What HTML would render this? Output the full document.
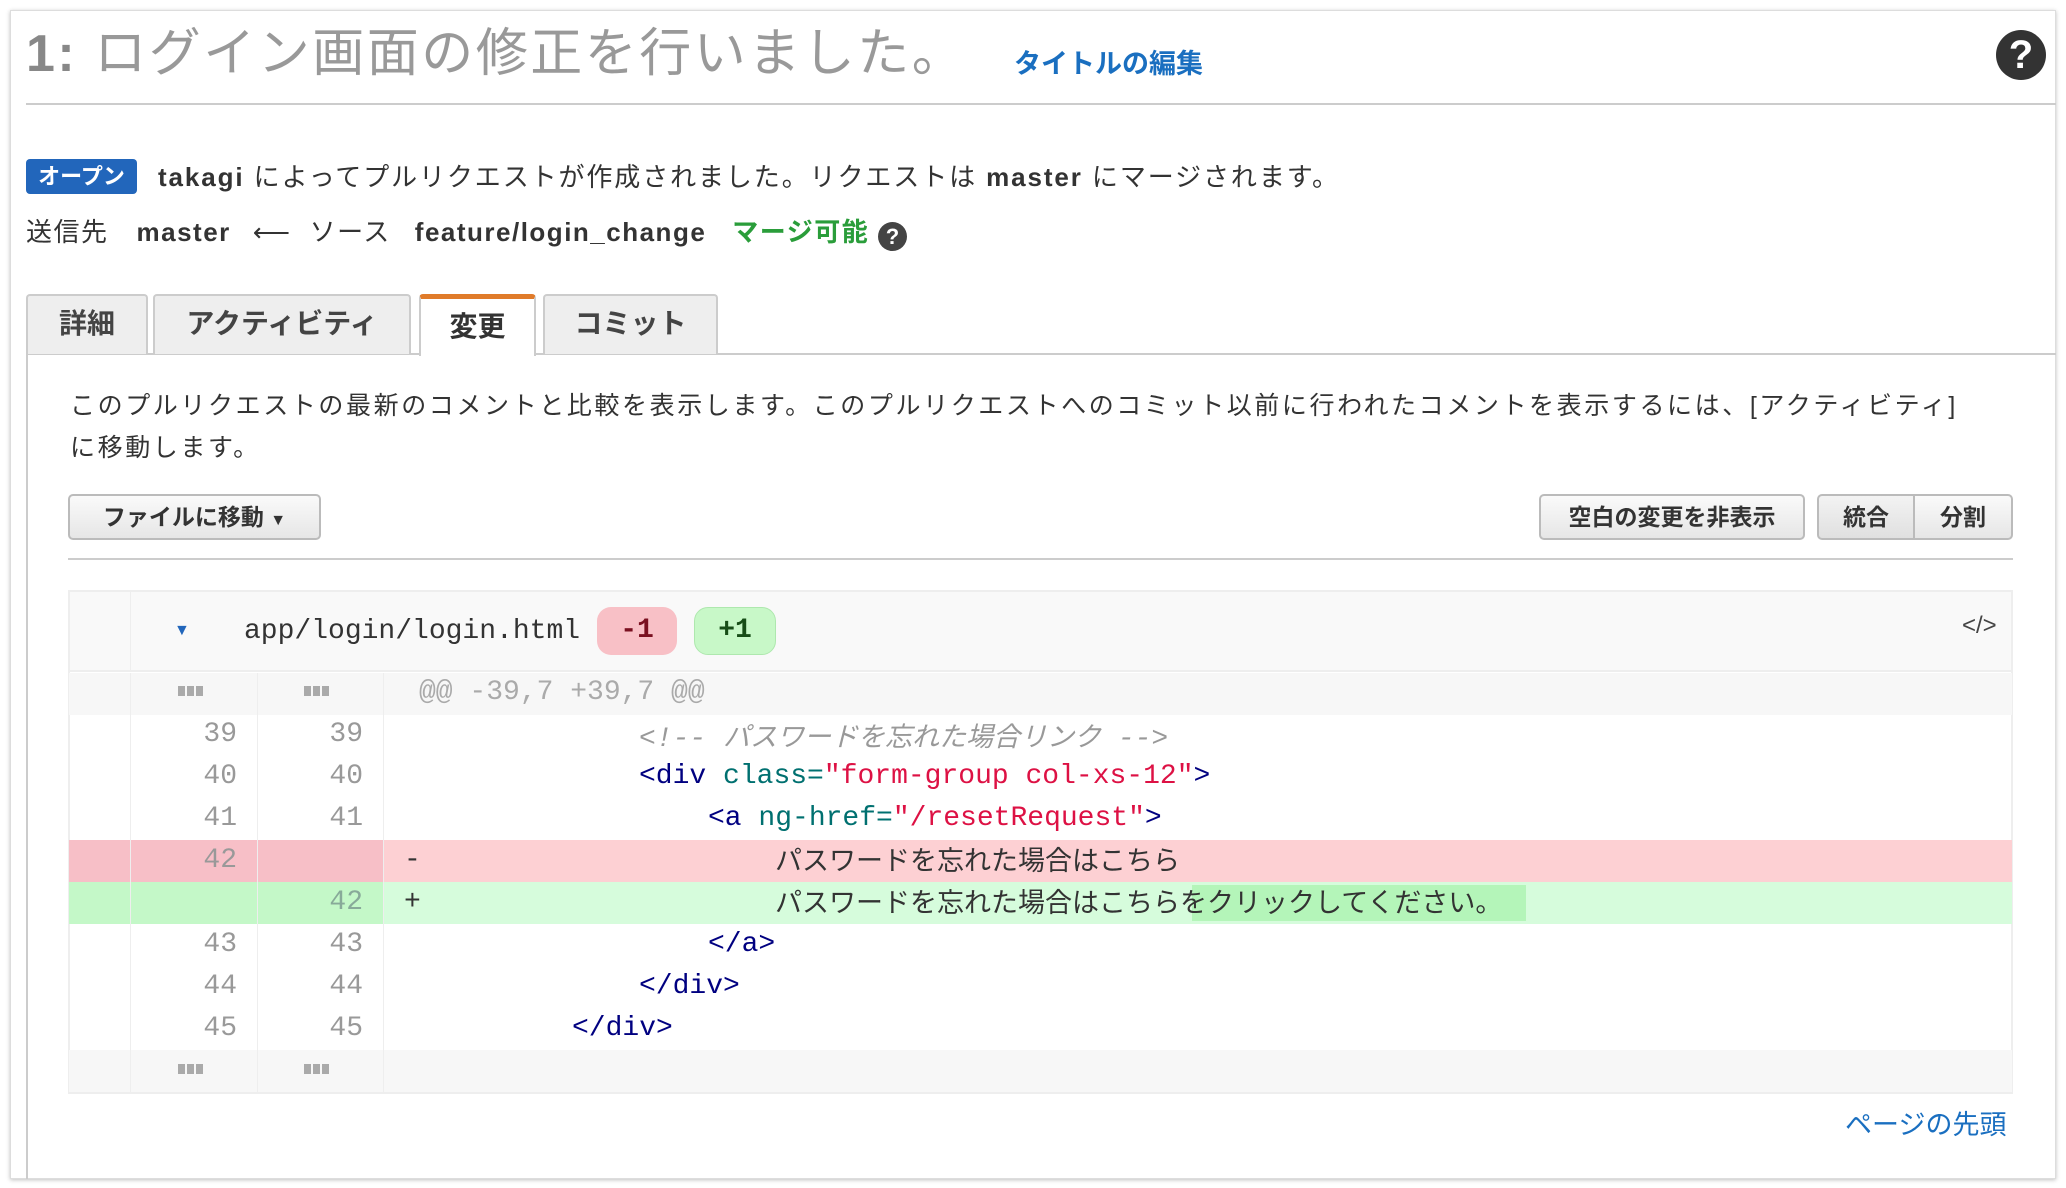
<!DOCTYPE html>
<html><head><meta charset="utf-8">
<style>
*{margin:0;padding:0;box-sizing:border-box}
body{width:2066px;height:1188px;background:#fff;position:relative;overflow:hidden;font-family:"Liberation Sans","Noto Sans CJK JP",sans-serif;color:#333}
.a{position:absolute;white-space:nowrap}
.card{left:10px;top:10px;width:2046px;height:1169px;border:1px solid #ddd;box-shadow:0 1px 4px rgba(0,0,0,.25)}
.mono{font-family:"Liberation Mono","Noto Sans CJK JP",monospace;font-size:28px}
.jp{font-family:"Noto Sans CJK JP",sans-serif;font-size:27px}
.tab{top:294px;height:60px;background:#eee;border:2px solid #ccc;border-bottom:none;border-radius:4px 4px 0 0;font-size:28px;font-weight:bold;color:#444;text-align:center;line-height:56px}
.btn{top:494px;height:46px;background:linear-gradient(#fafafa,#e6e6e6);border:2px solid #bbb;border-radius:5px;font-size:23px;font-weight:bold;color:#333;text-align:center;line-height:42px}
.row{left:69px;width:1943px;height:42px}
.ln{color:#999;font-size:28px;line-height:42px;text-align:right}
.code{line-height:42px}
.t{color:#000080}.at{color:#007070}.s{color:#dd1144}
.dots{font-size:0}
.dots i{display:inline-block;width:7px;height:10px;background:#aaa;margin-right:2px}
</style></head><body>
<div class="a card"></div>
<!-- title -->
<div class="a" style="left:26px;top:18px;font-size:52px;color:#999;line-height:72px;letter-spacing:2.5px"><b style="color:#888">1:</b> ログイン画面の修正を行いました。</div>
<div class="a" style="left:1014px;top:44px;font-size:27px;font-weight:bold;color:#1a6fc0;line-height:40px">タイトルの編集</div>
<div class="a" style="left:1996px;top:30px;width:50px;height:50px;border-radius:50%;background:#333;color:#fff;font-weight:bold;font-size:40px;text-align:center;line-height:50px">?</div>
<div class="a" style="left:26px;top:103px;width:2030px;height:2px;background:#ccc"></div>
<!-- status -->
<div class="a" style="left:26px;top:159px;width:111px;height:35px;background:#2266bb;border-radius:4px;color:#fff;font-weight:bold;font-size:22px;text-align:center;line-height:35px">オープン</div>
<div class="a" style="left:158px;top:158px;font-size:26px;line-height:38px;color:#333;letter-spacing:1.9px"><b>takagi</b> によってプルリクエストが作成されました。リクエストは <b>master</b> にマージされます。</div>
<div class="a" style="left:26px;top:213px;font-size:26px;line-height:38px;color:#333;letter-spacing:1.5px">送信先<span style="display:inline-block;width:28px"></span><b>master</b><span style="display:inline-block;width:22px"></span>⟵<span style="display:inline-block;width:18px"></span>ソース<span style="display:inline-block;width:24px"></span><b>feature/login_change</b><span style="display:inline-block;width:26px"></span><b style="color:#2a9d3a">マージ可能</b> <span style="display:inline-block;width:29px;height:29px;border-radius:50%;background:#444;color:#fff;font-size:22px;font-weight:bold;text-align:center;line-height:29px;vertical-align:-3px;letter-spacing:0">?</span></div>
<!-- tabs -->
<div class="a" style="left:26px;top:353px;width:2030px;height:2px;background:#ccc"></div>
<div class="a tab" style="left:26px;width:122px">詳細</div>
<div class="a tab" style="left:153px;width:258px">アクティビティ</div>
<div class="a tab" style="left:419px;width:117px;height:62px;background:#fff;border-top:5px solid #e07b2a;line-height:56px;color:#333">変更</div>
<div class="a tab" style="left:543px;width:175px">コミット</div>
<div class="a" style="left:26px;top:354px;width:2px;height:825px;background:#ccc"></div>
<!-- desc -->
<div class="a" style="left:70px;top:385px;font-size:25px;line-height:42px;color:#333;letter-spacing:2.6px">このプルリクエストの最新のコメントと比較を表示します。このプルリクエストへのコミット以前に行われたコメントを表示するには、[アクティビティ]<br>に移動します。</div>
<!-- buttons -->
<div class="a btn" style="left:68px;width:253px">ファイルに移動 <span style="font-size:16px">▼</span></div>
<div class="a btn" style="left:1539px;width:266px">空白の変更を非表示</div>
<div class="a btn" style="left:1817px;width:98px;border-radius:5px 0 0 5px;background:linear-gradient(#f3f3f3,#e0e0e0)">統合</div>
<div class="a btn" style="left:1913px;width:100px;border-radius:0 5px 5px 0">分割</div>
<div class="a" style="left:68px;top:558px;width:1945px;height:2px;background:#ccc"></div>
<!-- diff box -->
<div class="a" style="left:68px;top:590px;width:1945px;height:504px;border:2px solid #eee;background:#fff"></div>
<div class="a" style="left:70px;top:592px;width:1941px;height:80px;background:#f9f9f9;border-bottom:2px solid #eee"></div>
<div class="a" style="left:130px;top:592px;width:1px;height:80px;background:#eee"></div>
<div class="a" style="left:174px;top:622px;font-size:16px;color:#2266bb">▼</div>
<div class="a mono" style="left:244px;top:612px;line-height:40px;color:#333">app/login/login.html</div>
<div class="a mono" style="left:597px;top:607px;width:80px;height:48px;background:#f8c0c6;border-radius:14px;text-align:center;line-height:48px;color:#7a1020;font-weight:bold">-1</div>
<div class="a mono" style="left:694px;top:607px;width:82px;height:48px;background:#c8f8c8;border:1px solid #aee8ae;border-radius:14px;text-align:center;line-height:46px;color:#174d17;font-weight:bold">+1</div>
<div class="a" style="left:1962px;top:612px;font-size:24px;color:#444">&lt;/&gt;</div>
<!-- rows backgrounds -->
<div class="a row" style="top:673px;background:#f7f7f7"></div>
<div class="a row" style="top:840px;background:#fdd0d3"></div>
<div class="a" style="left:69px;top:840px;width:314px;height:42px;background:#f7bfc7"></div>
<div class="a row" style="top:882px;background:#d6fcdc"></div>
<div class="a" style="left:69px;top:882px;width:314px;height:42px;background:#c4f8c8"></div>
<div class="a" style="left:1192px;top:885px;width:334px;height:36px;background:#b4f5b9"></div>
<div class="a row" style="top:1050px;height:42px;background:#f7f7f7"></div>
<div class="a" style="left:130px;top:673px;width:1px;height:419px;background:#eee"></div>
<div class="a" style="left:257px;top:673px;width:1px;height:419px;background:#eee"></div>
<div class="a" style="left:383px;top:673px;width:1px;height:419px;background:#eee"></div>
<!-- line numbers -->
<div class="a dots" style="left:178px;top:686px"><i></i><i></i><i></i></div>
<div class="a dots" style="left:304px;top:686px"><i></i><i></i><i></i></div>
<div class="a dots" style="left:178px;top:1064px"><i></i><i></i><i></i></div>
<div class="a dots" style="left:304px;top:1064px"><i></i><i></i><i></i></div>
<div class="a ln mono" style="left:130px;top:714px;width:107px">39<br>40<br>41<br><span style="color:#999">42</span><br>&nbsp;<br>43<br>44<br>45</div>
<div class="a ln mono" style="left:257px;top:714px;width:106px">39<br>40<br>41<br>&nbsp;<br><span style="color:#8a9">42</span><br>43<br>44<br>45</div>
<!-- code -->
<div class="a mono code" style="left:419px;top:672px;color:#aaa">@@ -39,7 +39,7 @@</div>
<div class="a mono code" style="left:639px;top:714px;color:#999;font-style:italic">&lt;!-- <span class="jp">パスワードを忘れた場合リンク</span> --&gt;</div>
<div class="a mono code" style="left:639px;top:756px"><span class="t">&lt;div</span> <span class="at">class=</span><span class="s">"form-group col-xs-12"</span><span class="t">&gt;</span></div>
<div class="a mono code" style="left:708px;top:798px"><span class="t">&lt;a</span> <span class="at">ng-href=</span><span class="s">"/resetRequest"</span><span class="t">&gt;</span></div>
<div class="a mono code" style="left:404px;top:840px;color:#333">-</div>
<div class="a jp code" style="left:775px;top:838px;color:#333">パスワードを忘れた場合はこちら</div>
<div class="a mono code" style="left:404px;top:882px;color:#333">+</div>
<div class="a jp code" style="left:775px;top:880px;color:#333">パスワードを忘れた場合はこちらをクリックしてください。</div>
<div class="a mono code t" style="left:708px;top:924px">&lt;/a&gt;</div>
<div class="a mono code t" style="left:639px;top:966px">&lt;/div&gt;</div>
<div class="a mono code t" style="left:572px;top:1008px">&lt;/div&gt;</div>
<!-- footer link -->
<div class="a" style="left:1845px;top:1106px;font-size:27px;color:#1a6fc0;line-height:38px">ページの先頭</div>
</body></html>
